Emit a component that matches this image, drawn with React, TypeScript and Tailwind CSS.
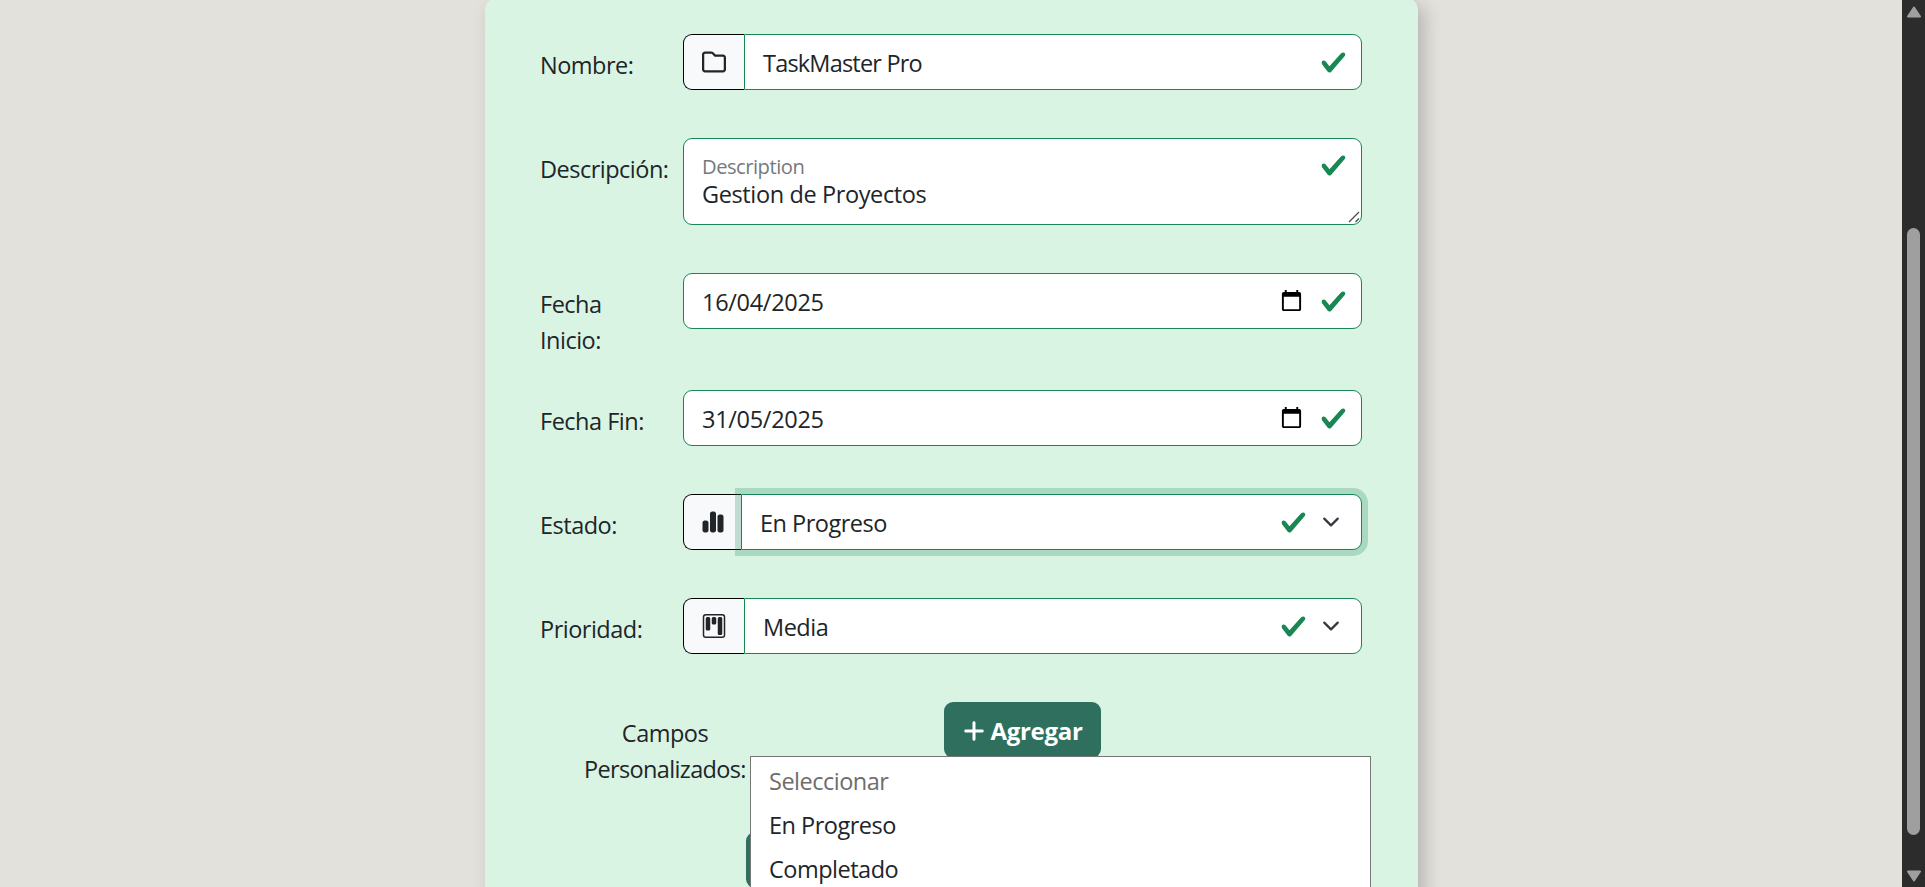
import type { ReactNode } from "react";
import { FaChartSimple, FaPlus, FaRegFolder } from "react-icons/fa6";
import { BsKanban } from "react-icons/bs";

function Check() {
  return (
    <svg viewBox="0 0 8 8" className="size-[27px] shrink-0">
      <path
        fill="#198754"
        d="M2.3 6.73.6 4.53c-.4-1.04.46-1.4 1.1-.8l1.1 1.4 3.4-3.8c.6-.63 1.6-.27 1.2.7l-4 4.6c-.43.5-.8.4-1.1.1z"
      />
    </svg>
  );
}

function Chevron() {
  return (
    <svg viewBox="0 0 16 16" className="mr-[7px] ml-[15px] size-[18px] shrink-0">
      <path
        fill="none"
        stroke="#343a40"
        strokeLinecap="round"
        strokeLinejoin="round"
        strokeWidth="2"
        d="m2 5 6 6 6-6"
      />
    </svg>
  );
}

function Calendar() {
  return (
    <svg viewBox="0 0 24 24" className="mr-[17px] mb-px size-[23px] shrink-0">
      <path d="M20 3h-1V1h-2v2H7V1H5v2H4c-1.1 0-2 .9-2 2v16c0 1.1.9 2 2 2h16c1.1 0 2-.9 2-2V5c0-1.1-.9-2-2-2zm0 18H4V8h16v13z" />
    </svg>
  );
}

function Row({ label, height, children }: { label: string; height: string; children: ReactNode }) {
  return (
    <div className={`flex shrink-0 items-start ${height}`}>
      <label className="w-[143px] shrink-0 pt-[13px]">
        <span className="block w-[120px]">{label}</span>
      </label>
      {children}
    </div>
  );
}

function Addon({ width, children }: { width: string; children: ReactNode }) {
  return (
    <div
      className={`flex h-14 shrink-0 items-center justify-center rounded-l-[9px] border border-r-0 border-black bg-[#f8f9fa] ${width}`}
    >
      {children}
    </div>
  );
}

function Box({ className, children }: { className: string; children: ReactNode }) {
  return (
    <div className={`flex h-14 min-w-0 flex-1 items-center border border-[#198754] bg-white pr-[14px] pl-[18px] ${className}`}>
      {children}
    </div>
  );
}

export default function App() {
  return (
    <div className="flex h-[887px] w-full overflow-hidden bg-[#e3e1dc] font-['Open_Sans','Noto_Sans',sans-serif] text-[23.5px] leading-[36px] tracking-[-0.5px] text-[#212529]">
      <main className="relative flex flex-1">
        <section className="-mt-[2px] ml-[485px] flex h-[1000px] w-[933px] flex-col rounded-xl bg-[#daf4e4] pt-9 pr-[56px] pl-[55px] shadow-[6px_6px_18px_rgba(0,0,0,0.2)]">
          <Row label="Nombre:" height="h-[104px]">
            <Addon width="w-[61px]">
              <FaRegFolder className="size-6" />
            </Addon>
            <Box className="rounded-r-[9px]">
              <span className="flex-1 pt-[2px] tracking-[-0.8px]">TaskMaster Pro</span>
              <Check />
            </Box>
          </Row>

          <Row label="Descripción:" height="h-[135px]">
            <div className="relative flex h-[87px] flex-1 items-start justify-between rounded-[9px] border border-[#198754] bg-white pt-[13px] pr-[14px] pl-[18px]">
              <div>
                <div className="text-[20.2px] leading-7 text-[#74797d]">Description</div>
                <div className="leading-7 tracking-[-0.38px]">Gestion de Proyectos</div>
              </div>
              <Check />
              <svg viewBox="0 0 12 12" className="absolute right-[1px] bottom-[1px] size-3">
                <path d="M1 11 11 1M7.5 11 11 7.5" stroke="#4a4a4a" strokeWidth="1.3" fill="none" />
              </svg>
            </div>
          </Row>

          <Row label="Fecha Inicio:" height="h-[117px]">
            <Box className="rounded-[9px]">
              <span className="flex-1 pt-[2px] tracking-[-0.3px]">16/04/2025</span>
              <Calendar />
              <Check />
            </Box>
          </Row>

          <Row label="Fecha Fin:" height="h-[104px]">
            <Box className="rounded-[9px]">
              <span className="flex-1 pt-[2px] tracking-[-0.3px]">31/05/2025</span>
              <Calendar />
              <Check />
            </Box>
          </Row>

          <Row label="Estado:" height="h-[104px]">
            <Addon width="w-[58px]">
              <FaChartSimple className="size-6" />
            </Addon>
            <Box className="rounded-r-[9px] shadow-[0_0_0_6px_rgba(25,135,84,0.25)]">
              <span className="flex-1 pt-[2px]">En Progreso</span>
              <Check />
              <Chevron />
            </Box>
          </Row>

          <Row label="Prioridad:" height="h-[104px]">
            <Addon width="w-[61px]">
              <BsKanban className="size-6" />
            </Addon>
            <Box className="rounded-r-[9px]">
              <span className="flex-1 pt-[2px]">Media</span>
              <Check />
              <Chevron />
            </Box>
          </Row>

          <div className="flex h-[130px] shrink-0 items-start pl-[44px]">
            <div className="w-[162px] pt-[13px] text-center tracking-[-0.65px]">
              <div className="tracking-[-0.5px]">Campos</div>
              Personalizados:
            </div>
            <button className="ml-[198px] flex h-14 w-[157px] items-center justify-center gap-[4px] rounded-[9px] bg-[#2e6f5e] pt-[2px] text-[24px] font-bold tracking-[-0.3px] text-white">
              <FaPlus className="size-6" />
              <span>Agregar</span>
            </button>
          </div>
          <div className="ml-[206px] h-14 w-[280px] shrink-0 rounded-[9px] bg-[#2e6f5e]" />
        </section>

        <div className="absolute top-[756px] left-[750px] h-[200px] w-[621px] border border-[#767676] bg-white pt-[2px] pl-[18px] leading-[44px]">
          <div className="text-[#6d6d6d]">Seleccionar</div>
          <div>En Progreso</div>
          <div>Completado</div>
        </div>
      </main>

      <aside className="flex w-[23px] shrink-0 flex-col items-center bg-[#2c2c2c]">
        <svg viewBox="0 0 14 12" className="mt-[6px] h-3 w-[14px]">
          <path d="M7 1.5 13 10.5H1Z" fill="#9f9f9f" stroke="#9f9f9f" strokeWidth="2" strokeLinejoin="round" />
        </svg>
        <div className="mt-[210px] h-[607px] w-[13px] rounded-full bg-[#9f9f9f]" />
        <svg viewBox="0 0 14 12" className="mt-[35px] h-3 w-[14px]">
          <path d="M7 10.5 13 1.5H1Z" fill="#9f9f9f" stroke="#9f9f9f" strokeWidth="2" strokeLinejoin="round" />
        </svg>
      </aside>
    </div>
  );
}
